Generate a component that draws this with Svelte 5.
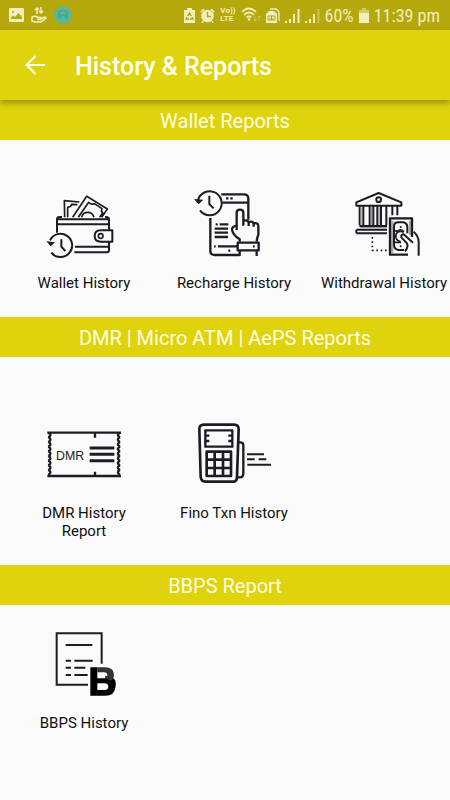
<script lang="ts">
  const sections = [
    {
      title: 'Wallet Reports',
      size: 'regular',
      items: [
        { label: 'Wallet History', icon: 'wallet', viewBox: '42 18 240 240' },
        { label: 'Recharge History', icon: 'recharge', viewBox: '72 18 240 240' },
        { label: 'Withdrawal History', icon: 'withdrawal', viewBox: '102 18 240 240' }
      ]
    },
    {
      title: 'DMR | Micro ATM | AePS Reports',
      size: 'tall',
      items: [
        { label: 'DMR History Report', icon: 'dmr', viewBox: '42 3 240 240' },
        { label: 'Fino Txn History', icon: 'fino', viewBox: '72 18 240 240' }
      ]
    },
    {
      title: 'BBPS Report',
      size: 'short',
      items: [{ label: 'BBPS History', icon: 'bbps', viewBox: '42 18 240 240' }]
    }
  ]

  const teeth = [0, 1, 2, 3, 4, 5, 6, 7, 8]
</script>

<div class="screen">
  <div class="status-bar">
    <div class="notifications">
      <svg width="15" height="14" viewBox="0 0 15 14">
        <path fill="currentColor" fill-rule="evenodd" d="M1 0h13a1 1 0 0 1 1 1v12a1 1 0 0 1-1 1H1a1 1 0 0 1-1-1V1a1 1 0 0 1 1-1zM2 11h11V9L9.500 5 6 9 4 7.500 2 9.500zM4 3a1 1 0 1 0 0 2 1 1 0 0 0 0-2z" />
      </svg>
      <svg width="16" height="16" viewBox="0 0 16 16" fill="none" stroke="currentColor" stroke-width="1.500">
        <path d="M6 7V1M4 3l2-2 2 2M10 0v6M8 4l2 2 2-2M1 15v-5l3-1 3 1.500h3v2H6M10 12l4-2 1 1-5 4H4l-3-1" />
      </svg>
      <svg width="18" height="18" viewBox="0 0 18 18" fill="none">
        <circle cx="9" cy="9" r="9" fill="#5ab795" />
        <path d="M5 13V6q4-3 8 0v7M7 12V9h4v3" stroke="#42a58b" stroke-width="1.500" />
      </svg>
    </div>
    <div class="system">
      <svg width="11" height="15" viewBox="0 0 11 15">
        <path fill="currentColor" d="M3 0h5v2h3v13H0V2h3z" />
        <path d="M3.500 8l2-3 2 3M8 9l1 2H6M5 11H2l1-2" fill="none" stroke="#b5a80d" stroke-width="1.300" />
      </svg>
      <svg width="15" height="15" viewBox="0 0 15 15">
        <circle cx="7.500" cy="8" r="6.300" fill="currentColor" />
        <path d="M1 4l3-3M14 4l-3-3M3 13l-1 2M12 13l1 2" stroke="currentColor" stroke-width="1.500" />
        <path d="M7.500 4v4.500H11" fill="none" stroke="#b5a80d" stroke-width="1.300" />
      </svg>
      <span class="volte"><span>Vo))</span><span>LTE</span></span>
      <svg width="20" height="16" viewBox="0 0 20 16" fill="none" stroke="currentColor" stroke-width="1.700">
        <path d="M1 5Q8-2 15 5M3 8q5-5 10 0M5.500 10.500q2.500-2.500 5 0" />
        <circle cx="8" cy="12.500" r="1.200" fill="currentColor" stroke="none" />
        <path d="M14 9v5M12.500 12.500L14 14l1.500-1.500M18 14V9M16.500 10.500L18 9l1.500 1.500" stroke-width="1" opacity="0.4" />
      </svg>
      <svg width="14" height="15" viewBox="0 0 14 15">
        <path d="M4 1h6l3 3v9" fill="none" stroke="currentColor" stroke-width="1.300" />
        <path d="M3 3h5l3 3v9H0V6z" fill="currentColor" />
        <path d="M2 12V8h7v4zM4 12v-2M5.500 12V8M7 12v-2" fill="none" stroke="#b5a80d" />
      </svg>
      {#each ['full', 'weak'] as strength}
        <svg width="15" height="15" viewBox="0 0 15 15" fill="currentColor">
          <path d="M0 13h2v2H0zM4 11h2v4H4zM8 6h2v9H8z" />
          <path d="M12.500 1h2v14h-2z" opacity={strength === 'weak' ? 0.4 : 1} />
        </svg>
      {/each}
      <span class="reading">60%</span>
      <svg width="10" height="15" viewBox="0 0 10 15" fill="currentColor">
        <path d="M3 0h4v2h3v3H0V2h3z" opacity="0.5" />
        <path d="M0 5h10v10H0z" />
      </svg>
      <span class="reading">11:39 pm</span>
    </div>
  </div>

  <header class="app-bar">
    <button type="button" class="back" aria-label="Back">
      <svg width="20" height="20" viewBox="0 0 20 20" fill="none" stroke="currentColor" stroke-width="2.200">
        <path d="M20 10H2M10.500 1L1.500 10l9 9" />
      </svg>
    </button>
    <h1>History &amp; Reports</h1>
  </header>

  <main>
    {#each sections as section}
      <section>
        <h2>{section.title}</h2>
        <div class="items {section.size}">
          {#each section.items as item}
            <button type="button" class="item">
              <svg class="icon" viewBox={item.viewBox} fill="none" stroke="#1c1c24" stroke-width="7" stroke-linejoin="round" aria-hidden="true">
                {#if item.icon === 'wallet'}
                  <path d="M81 158V118q0-7 8-7h7M79 118h158V149M237 186v25q0 6-6 6h-98M82 133h154M135 200h101M225 111q12 0 12 7" stroke-width="6" />
                  <path d="M247 151h-35q-18 0-18 17t18 17h35z" stroke-width="6" />
                  <circle cx="212" cy="168" r="7" stroke-width="5" />
                  <path d="M104 112l-1-50 45 4M113 112V82q10-1 12-9l17 1M128 112l42-63 62 38-17 25M145 112l31-45q8 8 17 4l23 15q-4 8 2 13l-9 13M155 112q3-15 18-15t19 15" stroke-width="5" />
                  <path d="M60 181A35 35 0 1 1 64 218M94 178v22l12 13" stroke-width="6" />
                  <path d="M49 184l13 15 13-12z" fill="#1c1c24" stroke="none" />
                {:else if item.icon === 'recharge'}
                  <path d="M154 43h68q13 0 13 13v63M157 68h78M121 114v98q0 13 13 13h75M144 199h57" />
                  <path d="M168 55h7M181 55h7M132 199h5M175 212h6" />
                  <path d="M137 133h6M149 133h26M134 146h40M134 158h40M134 171h40" />
                  <path d="M83 69A36 36 0 1 1 90 91M118 47v25l13 13" stroke-width="6" />
                  <path d="M72 57l14 16 14-14z" fill="#1c1c24" stroke="none" />
                  <path d="M209 185v-7q-20-12-23-29 0-10 14-12M200 150V98q0-9 10-9t10 9v39M220 123q14-5 16 5v10M236 126q14-4 15 6v8M251 130q14-3 14 9v25q-4 9-5 21" />
                  <path d="M203 188h63v23h-63zM209 211v17M260 211v17M249 199h5" />
                {:else if item.icon === 'withdrawal'}
                  <path d="M139 77V67l67-28 68 28v10zM149 80v55M160 80v55M179 80v55M190 80v55M202 80v55M213 80v55M229 80v55M247 80v26M262 80v26M148 138h83M139 149h92M139 160h92M139 149v11" stroke-width="6" />
                  <path d="M153 82v52M184 82v52M207 82v52M151 143h80" stroke="#999" stroke-width="4" />
                  <circle cx="206" cy="59" r="7" stroke-width="6" />
                  <path d="M187 171v40h45" stroke-dasharray="5 8" stroke-width="5" />
                  <path d="M247 218v-96M300 122v43" stroke="#aaa" />
                  <path d="M294 224h-54V115h66v56" />
                  <path d="M282 210h-17q-13-3-13-15v-55q0-13 13-13h15q12 3 12 15v18" stroke-width="6" />
                  <path d="M253 151q6 5 13 0t16 4M253 187h20" stroke-width="5" />
                  <path d="M281 157q-9-6-19 0-7 7-4 17 3 9 14 11" stroke-width="5" />
                  <path d="M326 227v-42q0-15-15-30M309 188l-28-25q-9 0-7 9l17 18q5 11-6 24" fill="#fafafa" stroke-width="6" />
                  <circle cx="272" cy="141" r="3" fill="#1c1c24" stroke="none" />
                  <circle cx="272" cy="199" r="3" fill="#1c1c24" stroke="none" />
                {:else if item.icon === 'dmr'}
                  <path d="M52 53h221M52 183h221M195 53v15M195 183v-13" />
                  {#each teeth as tooth}
                    <path d="M55 {53 + tooth * 14}q13 7 0 14M270 {53 + tooth * 14}q-13 7 0 14" />
                  {/each}
                  <path d="M179 99h74M179 118h74M179 137h74" stroke-width="9" />
                  <text x="78" y="134" class="dmr-text">DMR</text>
                {:else if item.icon === 'fino'}
                  <path d="M102 44h90q14 0 14 14l-5 142q0 15-12 15h-83q-13 0-14-15L88 58q0-14 14-14z" stroke-width="8" />
                  <path d="M106 61h81v49h-81zM108 77h10M108 93h10M185 77h-10M185 93h-10" stroke-width="7" />
                  <path d="M110 125h73v73h-73zM134 125v73M159 125v73M110 149h73M110 174h73" stroke-width="8" />
                  <path d="M206 97h5q9 0 9 9v83q0 13-10 13h-8" />
                  <path d="M231 133h51M231 148h23M266 148h23M232 164h71" stroke-width="6" />
                {:else}
                  <path d="M215 131V40H80v154h94" stroke-linejoin="miter" stroke-width="6" />
                  <path d="M107 75h80M107 122h16M133 122h55M107 143h16M133 143h33M107 165h16M133 165h40" stroke-width="6" />
                  <path fill="#000" fill-rule="evenodd" stroke="none" d="M181 142h21v33h24v-7q38 0 30 35-3 24-30 24h-45zM202 190v20h22q11-1 11-10t-11-10z" />
                  <path fill="#333" stroke="none" d="M202 142h23q27 1 27 22 0 12-10 18-6-5-16-7 6-3 6-9 0-9-11-9h-19z" />
                {/if}
              </svg>
              <span class="label">{item.label}</span>
            </button>
          {/each}
        </div>
      </section>
    {/each}
  </main>
</div>

<style>
  :global(body) {
    margin: 0;
    background: #fafafa;
  }

  .screen {
    overflow: hidden;
    min-height: 100vh;
    background: #fafafa;
    color: #111;
    font-family: Roboto, sans-serif;
  }

  .status-bar {
    display: flex;
    justify-content: space-between;
    align-items: center;
    height: 30px;
    padding: 0 10px 0 9px;
    background: #b5a80d;
    color: #f2edbc;
  }

  .notifications,
  .system {
    display: flex;
    align-items: center;
    gap: 5px;
  }

  .notifications {
    gap: 7px;
  }

  .reading {
    font-family: 'Roboto Condensed', Roboto, sans-serif;
    font-size: 18px;
  }

  .volte {
    display: flex;
    flex-direction: column;
    font-size: 8px;
    font-weight: 700;
    line-height: 8px;
  }

  .app-bar {
    position: relative;
    display: flex;
    align-items: center;
    gap: 30px;
    height: 70px;
    padding: 0 25px;
    box-sizing: border-box;
    background: #dfd30e;
    box-shadow: 0 3px 6px rgba(70, 60, 0, 0.45);
    color: #fffff0;
  }

  .back {
    display: flex;
    padding: 0;
    border: none;
    background: none;
    color: inherit;
    cursor: pointer;
  }

  h1 {
    margin: 0;
    padding-top: 2px;
    font-size: 25px;
    font-weight: 500;
  }

  h2 {
    margin: 0;
    padding-top: 2px;
    background: #dfd30e;
    color: #fffde0;
    font-size: 20px;
    font-weight: 400;
    line-height: 38px;
    text-align: center;
  }

  .items {
    display: grid;
    grid-template-columns: repeat(3, 1fr);
    padding-bottom: 25px;
  }

  .regular {
    padding-top: 46px;
  }

  .tall {
    padding-top: 59px;
  }

  .short {
    padding-top: 21px;
  }

  .item {
    display: flex;
    flex-direction: column;
    align-items: center;
    gap: 8px;
    padding: 0 0 0 18px;
    border: none;
    background: none;
    color: inherit;
    font-family: inherit;
    font-size: 15px;
    line-height: 18px;
    cursor: pointer;
  }

  .icon {
    width: 80px;
    height: 80px;
  }

  .label {
    max-width: 130px;
  }

  .dmr-text {
    fill: #222;
    stroke: none;
    font-family: 'Liberation Sans', sans-serif;
    font-size: 37px;
  }
</style>
